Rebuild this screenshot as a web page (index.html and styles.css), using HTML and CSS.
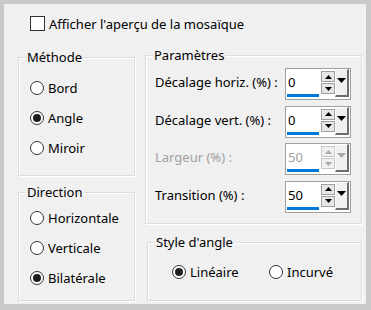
FILE: index.html
```html
<!DOCTYPE html>
<html lang="fr">
<head>
<meta charset="utf-8">
<link rel="stylesheet" href="styles.css">
</head>
<body>
<div class="window">
  <div class="check-row"><span class="checkbox"></span><span>Afficher l'aperçu de la mosaïque</span></div>
  <div class="columns">
    <div class="col-left">
      <div class="group methode">
        <span class="group-title">Méthode</span>
        <div class="radio-row"><span class="radio"></span><span>Bord</span></div>
        <div class="radio-row"><span class="radio on"></span><span>Angle</span></div>
        <div class="radio-row"><span class="radio"></span><span>Miroir</span></div>
      </div>
      <div class="group direction">
        <span class="group-title">Direction</span>
        <div class="radio-row"><span class="radio"></span><span>Horizontale</span></div>
        <div class="radio-row"><span class="radio"></span><span>Verticale</span></div>
        <div class="radio-row"><span class="radio on"></span><span>Bilatérale</span></div>
      </div>
    </div>
    <div class="col-right">
      <div class="group params">
        <span class="group-title">Paramètres</span>
        <div class="param-row">
          <span class="param-label">Décalage horiz. (%) :</span>
          <div class="spin">
            <div class="spin-field"><span class="spin-value">0</span></div>
            <div class="spin-btns">
              <span class="sbtn"><svg width="7" height="4" viewBox="0 0 7 4"><path d="M3.5 0 7 4H0z"/></svg></span>
              <span class="sbtn"><svg width="7" height="4" viewBox="0 0 7 4"><path d="M0 0h7L3.5 4z"/></svg></span>
            </div>
            <span class="drop"><svg width="9" height="5" viewBox="0 0 9 5"><path d="M0 0h9L4.5 5z"/></svg></span>
          </div>
        </div>
        <div class="param-row">
          <span class="param-label">Décalage vert. (%) :</span>
          <div class="spin">
            <div class="spin-field"><span class="spin-value">0</span></div>
            <div class="spin-btns">
              <span class="sbtn"><svg width="7" height="4" viewBox="0 0 7 4"><path d="M3.5 0 7 4H0z"/></svg></span>
              <span class="sbtn"><svg width="7" height="4" viewBox="0 0 7 4"><path d="M0 0h7L3.5 4z"/></svg></span>
            </div>
            <span class="drop"><svg width="9" height="5" viewBox="0 0 9 5"><path d="M0 0h9L4.5 5z"/></svg></span>
          </div>
        </div>
        <div class="param-row disabled">
          <span class="param-label">Largeur (%) :</span>
          <div class="spin">
            <div class="spin-field"><span class="spin-value">50</span></div>
            <div class="spin-btns">
              <span class="sbtn"><svg width="7" height="4" viewBox="0 0 7 4"><path d="M3.5 0 7 4H0z"/></svg></span>
              <span class="sbtn"><svg width="7" height="4" viewBox="0 0 7 4"><path d="M0 0h7L3.5 4z"/></svg></span>
            </div>
            <span class="drop"><svg width="9" height="5" viewBox="0 0 9 5"><path d="M0 0h9L4.5 5z"/></svg></span>
          </div>
        </div>
        <div class="param-row">
          <span class="param-label">Transition (%) :</span>
          <div class="spin">
            <div class="spin-field"><span class="spin-value">50</span></div>
            <div class="spin-btns">
              <span class="sbtn"><svg width="7" height="4" viewBox="0 0 7 4"><path d="M3.5 0 7 4H0z"/></svg></span>
              <span class="sbtn"><svg width="7" height="4" viewBox="0 0 7 4"><path d="M0 0h7L3.5 4z"/></svg></span>
            </div>
            <span class="drop"><svg width="9" height="5" viewBox="0 0 9 5"><path d="M0 0h9L4.5 5z"/></svg></span>
          </div>
        </div>
      </div>
      <div class="group style">
        <span class="group-title">Style d'angle</span>
        <div class="radio-row first"><span class="radio on"></span><span>Linéaire</span></div>
        <div class="radio-row"><span class="radio"></span><span>Incurvé</span></div>
      </div>
    </div>
  </div>
</div>
</body>
</html>
```
FILE: styles.css
```css
body {
  margin: 0;
  font-family: "Noto Sans", "Open Sans", sans-serif;
  font-size: 13px;
  color: #000;
}
.window {
  width: 371px;
  height: 310px;
  box-sizing: border-box;
  border-style: solid;
  border-color: #c9c9c9;
  border-width: 4px 5px 6px 4px;
  background: #f0f0f0;
}
.check-row {
  display: flex;
  align-items: center;
  gap: 4px;
  height: 15px;
  margin: 12px 0 0 26px;
  line-height: 18px;
}
.checkbox {
  width: 15px;
  height: 15px;
  box-sizing: border-box;
  border: 1px solid #333;
  background: #fff;
}
.columns {
  display: flex;
  gap: 10px;
  margin: 24px 0 0 14px;
}
.col-left {
  display: flex;
  flex-direction: column;
  gap: 16px;
  width: 117px;
  margin-top: 2px;
}
.col-right {
  display: flex;
  flex-direction: column;
  gap: 18px;
  width: 217px;
}
.group {
  position: relative;
  box-sizing: border-box;
  border: 1px solid #dcdcdc;
  box-shadow: 1px 1px 0 #fff, inset 1px 1px 0 #fff;
}
.group-title {
  position: absolute;
  top: -10px;
  left: 7px;
  padding: 0 1px;
  line-height: 18px;
  background: #f0f0f0;
}
.methode {
  height: 119px;
  padding: 15px 0 0 11px;
}
.direction {
  height: 109px;
  padding: 10px 0 0 11px;
}
.radio-row {
  display: flex;
  align-items: center;
  gap: 4px;
  height: 30px;
  line-height: 18px;
}
.radio {
  position: relative;
  flex: none;
  width: 14px;
  height: 14px;
  box-sizing: border-box;
  border: 1px solid #333;
  border-radius: 50%;
  background: #fff;
}
.radio.on::after {
  content: "";
  position: absolute;
  inset: 2px;
  border-radius: 50%;
  background: #1e1e1e;
}
.params {
  height: 169px;
  padding: 12px 10px 0 9px;
  display: flex;
  flex-direction: column;
  gap: 5.67px;
}
.param-row {
  display: flex;
  align-items: flex-start;
  height: 32px;
}
.param-label {
  width: 130px;
  margin-top: 5px;
  line-height: 18px;
}
.disabled .param-label,
.disabled .spin-value {
  color: #a0a0a0;
}
.spin {
  display: flex;
  width: 66px;
  height: 32px;
  box-sizing: border-box;
  border: 1px solid #a0a0a0;
  background: #fff;
}
.spin-field {
  display: flex;
  flex-direction: column;
  justify-content: space-between;
  width: 33px;
  box-sizing: border-box;
  padding: 4px 0 2px 1px;
}
.spin-value {
  padding-left: 1px;
  line-height: 18px;
}
.spin-field::after {
  content: "";
  height: 3px;
  background: #0078d7;
}
.spin-btns {
  display: flex;
  flex-direction: column;
  gap: 1px;
  margin: 2px 0 0 2px;
}
.sbtn {
  display: flex;
  align-items: center;
  justify-content: center;
  width: 14px;
  height: 11px;
  box-sizing: border-box;
  border: 1px solid #a0a0a0;
  background: #e6e6e6;
}
.sbtn svg, .drop svg {
  fill: #000;
}
.drop {
  display: flex;
  justify-content: center;
  width: 14px;
  height: 28px;
  box-sizing: border-box;
  padding-top: 8px;
  border-style: solid;
  border-width: 1px 2px 2px 1px;
  border-color: #fff #6d6d6d #6d6d6d #fff;
  background: #f0f0f0;
}
.disabled .sbtn svg, .disabled .drop svg {
  fill: #a8a8a8;
}
.disabled .sbtn {
  background: #f0f0f0;
  border-color: #c8c8c8;
}
.style {
  display: flex;
  align-items: center;
  width: 215px;
  height: 59px;
  margin-left: 2px;
  padding-left: 24px;
}
.style .radio-row.first {
  width: 97px;
}
```
